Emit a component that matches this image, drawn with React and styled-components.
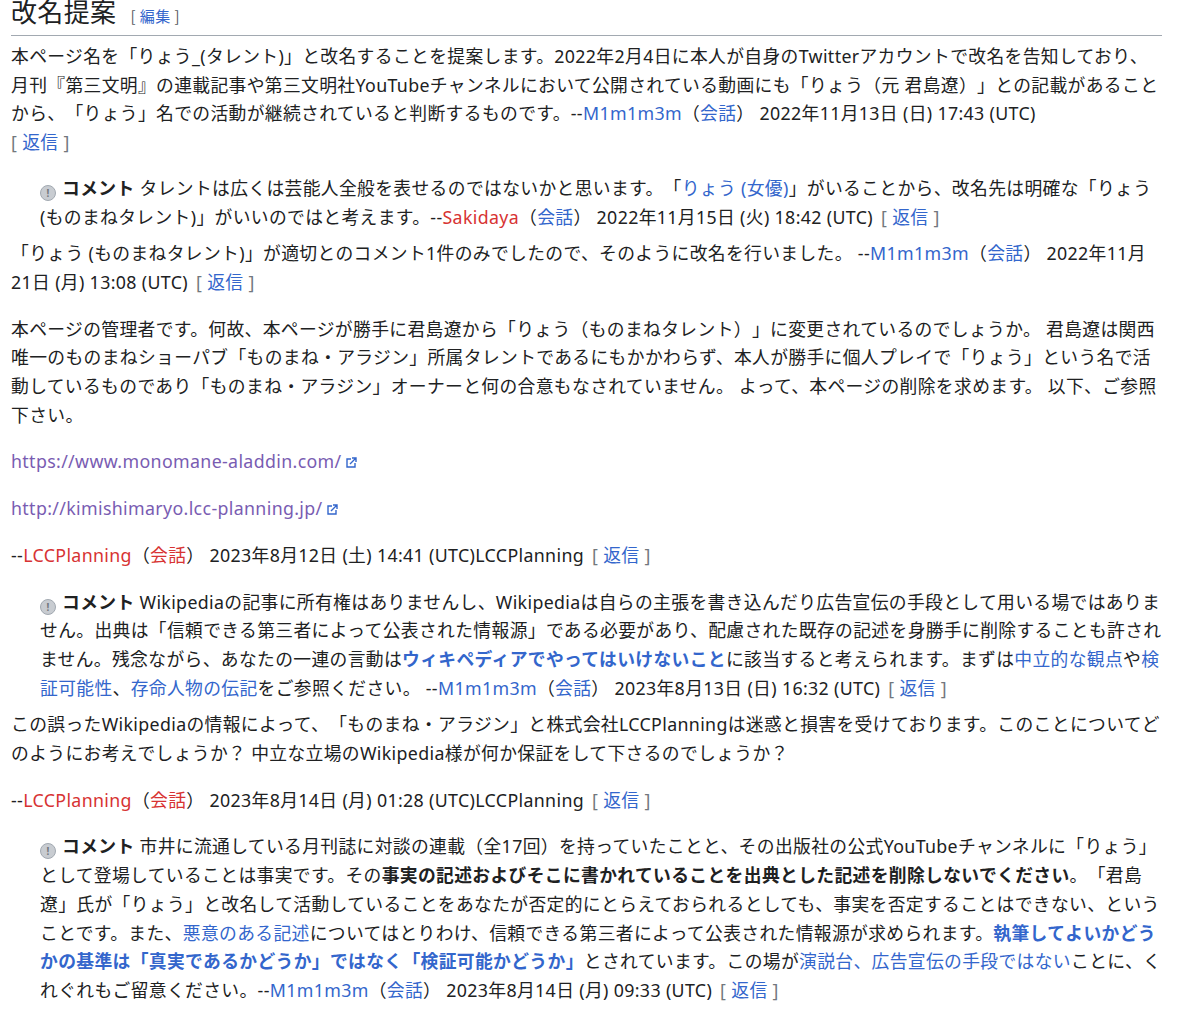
import React from "react";
import styled, { createGlobalStyle } from "styled-components";

const G = createGlobalStyle`
  body { margin: 0; background: #fff; }
  * { box-sizing: border-box; }
`;
const Page = styled.div`
  padding: 0 38px 0 11px;
  margin-top: -8px;
  font-family: "Noto Sans", "Noto Sans CJK JP", sans-serif;
  font-size: 17.8px;
  line-height: 28.7px;
  letter-spacing: 0.35px;
  text-spacing-trim: space-all;
  color: #202122;
`;
const H2 = styled.h2`
  font-family: "Noto Sans CJK JP", sans-serif;
  font-weight: 400;
  font-size: 26px;
  line-height: 38px;
  margin: 0 0 6px;
  border-bottom: 1px solid #a2a9b1;
  display: flex;
  align-items: baseline;
  gap: 14px;
`;
const Edit = styled.span`
  font-size: 15px;
  color: #54595d;
  a { color: #3366cc; margin: 0 4px; }
`;
const P = styled.p`
  margin: 0 0 ${(p) => p.$mb ?? 18}px;
`;
const Dd = styled.div`
  margin: 0 0 ${(p) => p.$mb ?? 8}px 29px;
`;
const A = styled.a`
  color: ${(p) => (p.$red ? "#d73333" : p.$visited ? "#795cb2" : "#3366cc")};
  font-weight: ${(p) => (p.$b ? 700 : 400)};
  text-decoration: none;
`;
const Reply = styled.span`
  color: #72777d;
  margin-left: ${(p) => (p.$first ? 0 : 8)}px;
  white-space: nowrap;
  a { color: #3366cc; text-decoration: none; margin: 0 5px; }
`;
const Icon = styled.span`
  display: inline-block;
  width: 16px; height: 16px;
  border-radius: 50%;
  background: #c8ccd1;
  border: 1px solid #a2a9b1;
  color: #72777d;
  font-size: 10px;
  line-height: 14px;
  text-align: center;
  font-weight: 700;
  margin-right: 6px;
  vertical-align: -2px;
`;
const ExtSvg = styled.svg`
  margin-left: 3px;
  vertical-align: -1px;
`;
const Ext = () => (
  <ExtSvg width="12" height="12" viewBox="0 0 12 12">
    <path d="M6 2H2v8h8V6" fill="none" stroke="#3366cc" strokeWidth="1.4" />
    <path d="M7 1h4v4M11 1L5 7" fill="none" stroke="#3366cc" strokeWidth="1.4" />
  </ExtSvg>
);
const R = ({ first }) => (<Reply $first={first}>[<a href="#">返信</a>]</Reply>);
const Cm = () => (<><Icon>!</Icon><b>コメント</b> </>);
const Sig = ({ u, red }) => (<>--<A $red={red}>{u}</A>（<A $red={red}>会話</A>）</>);

export default function App() {
  return (
    <Page>
      <G />
      <H2>改名提案<Edit>[<a>編集</a>]</Edit></H2>
      <P $mb={17}>
        本ページ名を「りょう_(タレント)」と改名することを提案します。2022年2月4日に本人が自身のTwitterアカウントで改名を告知しており、月刊『第三文明』の連載記事や第三文明社YouTubeチャンネルにおいて公開されている動画にも「りょう（元 君島遼）」との記載があることから、「りょう」名での活動が継続されていると判断するものです。<Sig u="M1m1m3m" /> 2022年11月13日 (日) 17:43 (UTC)<br />
        <R first />
      </P>
      <Dd>
        <Cm />タレントは広くは芸能人全般を表せるのではないかと思います。「<A>りょう (女優)</A>」がいることから、改名先は明確な「りょう (ものまねタレント)」がいいのではと考えます。--<A $red>Sakidaya</A>（<A>会話</A>） 2022年11月15日 (火) 18:42 (UTC)<R />
      </Dd>
      <P>
        「りょう (ものまねタレント)」が適切とのコメント1件のみでしたので、そのように改名を行いました。 <Sig u="M1m1m3m" /> 2022年11月21日 (月) 13:08 (UTC)<R />
      </P>
      <P>
        本ページの管理者です。何故、本ページが勝手に君島遼から「りょう（ものまねタレント）」に変更されているのでしょうか。 君島遼は関西唯一のものまねショーパブ「ものまね・アラジン」所属タレントであるにもかかわらず、本人が勝手に個人プレイで「りょう」という名で活動しているものであり「ものまね・アラジン」オーナーと何の合意もなされていません。 よって、本ページの削除を求めます。 以下、ご参照下さい。
      </P>
      <P><A $visited>https://www.monomane-aladdin.com/</A><Ext /></P>
      <P><A $visited>http://kimishimaryo.lcc-planning.jp/</A><Ext /></P>
      <P><Sig u="LCCPlanning" red /> 2023年8月12日 (土) 14:41 (UTC)LCCPlanning<R /></P>
      <Dd>
        <Cm />Wikipediaの記事に所有権はありませんし、Wikipediaは自らの主張を書き込んだり広告宣伝の手段として用いる場ではありません。出典は「信頼できる第三者によって公表された情報源」である必要があり、配慮された既存の記述を身勝手に削除することも許されません。残念ながら、あなたの一連の言動は<A $b>ウィキペディアでやってはいけないこと</A>に該当すると考えられます。まずは<A>中立的な観点</A>や<A>検証可能性</A>、<A>存命人物の伝記</A>をご参照ください。 <Sig u="M1m1m3m" /> 2023年8月13日 (日) 16:32 (UTC)<R />
      </Dd>
      <P>
        この誤ったWikipediaの情報によって、「ものまね・アラジン」と株式会社LCCPlanningは迷惑と損害を受けております。このことについてどのようにお考えでしょうか？ 中立な立場のWikipedia様が何か保証をして下さるのでしょうか？
      </P>
      <P><Sig u="LCCPlanning" red /> 2023年8月14日 (月) 01:28 (UTC)LCCPlanning<R /></P>
      <Dd>
        <Cm />市井に流通している月刊誌に対談の連載（全17回）を持っていたことと、その出版社の公式YouTubeチャンネルに「りょう」として登場していることは事実です。その<b>事実の記述およびそこに書かれていることを出典とした記述を削除しないでください</b>。「君島遼」氏が「りょう」と改名して活動していることをあなたが否定的にとらえておられるとしても、事実を否定することはできない、ということです。また、<A>悪意のある記述</A>についてはとりわけ、信頼できる第三者によって公表された情報源が求められます。<A $b>執筆してよいかどうかの基準は「真実であるかどうか」ではなく「検証可能かどうか」</A>とされています。この場が<A>演説台、広告宣伝の手段ではない</A>ことに、くれぐれもご留意ください。<Sig u="M1m1m3m" /> 2023年8月14日 (月) 09:33 (UTC)<R />
      </Dd>
    </Page>
  );
}
